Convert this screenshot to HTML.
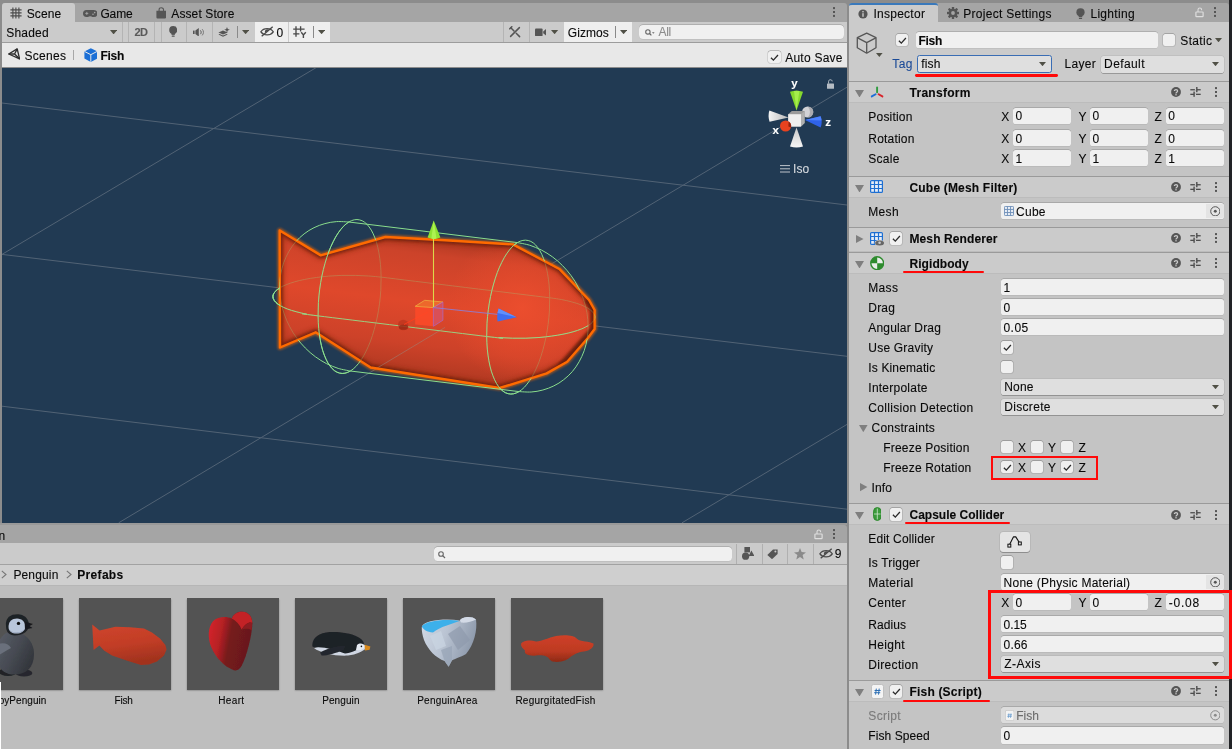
<!DOCTYPE html>
<html lang="en"><head><meta charset="utf-8"><title>Unity - Fish Prefab</title>
<style>
html,body{margin:0;padding:0;}
body{width:1232px;height:749px;overflow:hidden;background:#8c8c8c;font-family:"Liberation Sans",sans-serif;font-size:12px;color:#090909;}
#root{position:relative;width:1232px;height:749px;overflow:hidden;will-change:transform;}
#root div,#root span,#root svg{position:absolute;box-sizing:border-box;}
.t{white-space:nowrap;line-height:16px;height:16px;-webkit-font-smoothing:antialiased;-webkit-text-stroke:0.1px currentColor;}
.fld{background:#f0f0f0;border-radius:2.6px;box-shadow:0 -0.6px 0.5px rgba(0,0,0,.28),0 0.6px 0.5px rgba(0,0,0,.10);}
.dd{background:#dfdfdf;border-radius:2.6px;box-shadow:0 0 0 0.5px rgba(0,0,0,.10),0 0.7px 0.5px rgba(0,0,0,.28);}
.cb{background:#f0f0f0;border-radius:2px;box-shadow:0 0 0 0.6px rgba(0,0,0,.16),0 -0.6px 0.4px rgba(0,0,0,.25);}
.btn{background:#e4e4e4;border-radius:3px;box-shadow:0 0 0 0.5px rgba(0,0,0,.12),0 0.8px 0.5px rgba(0,0,0,.30);}

</style></head>
<body>
<div id="root">
<div style="left:1229px;top:0px;width:3px;height:749px;background:#222326;"></div>
<div style="left:2px;top:3px;width:845px;height:19px;background:#a5a5a5;border-radius:3px 3px 0 0;"></div>
<div style="left:2px;top:3px;width:73px;height:19px;background:#cbcbcb;border-radius:3px 3px 0 0;"></div>
<div style="left:2px;top:21.5px;width:845px;height:21px;background:#cbcbcb;"></div>
<div style="left:2px;top:42px;width:845px;height:1px;background:#9c9c9c;"></div>
<div style="left:2px;top:43px;width:845px;height:24.3px;background:#e8e8e8;"></div>
<div style="left:2px;top:67.2px;width:845px;height:1px;background:#8c8c8c;"></div>
<svg style="left:9.6px;top:6.6px;" width="12" height="12" viewBox="0 0 12 12"><path d="M2.9 0.4V11.6M5.9 0.4V11.6M8.9 0.4V11.6M0.4 2.9H11.6M0.4 5.9H11.6M0.4 8.9H11.6" stroke="#4d4d4d" stroke-width="1.15" fill="none"/></svg>
<span class="t" style="left:26.70px;top:5.70px;font-size:12px;letter-spacing:0.135px;">Scene</span>
<svg style="left:82.8px;top:10px;" width="14.4" height="7" viewBox="0 0 14.4 7"><rect x="0" y="0" width="14.4" height="7" rx="3.5" fill="#555"/><ellipse cx="7.2" cy="7.3" rx="2.1" ry="1" fill="#a5a5a5"/><path d="M2.3 3.4H5.3M3.8 1.9V4.9" stroke="#a5a5a5" stroke-width="0.9"/><circle cx="10" cy="4.3" r="0.8" fill="#a5a5a5"/><circle cx="11.7" cy="2.6" r="0.8" fill="#a5a5a5"/></svg>
<span class="t" style="left:100.40px;top:5.70px;font-size:12px;letter-spacing:-0.119px;">Game</span>
<svg style="left:155.8px;top:7.2px;" width="10.6" height="11.6" viewBox="0 0 10.6 11.6"><path d="M0.4 3.8H10.2V10.2A1.2 1.2 0 0 1 9 11.4H1.6A1.2 1.2 0 0 1 0.4 10.2Z" fill="#555"/><path d="M3.1 4V2.6C3.1 0.2 7.5 0.2 7.5 2.6V4" fill="none" stroke="#555" stroke-width="1.1"/></svg>
<span class="t" style="left:171.30px;top:5.70px;font-size:12px;letter-spacing:0.107px;">Asset Store</span>
<svg style="left:831.8px;top:5.800000000000001px;" width="4" height="12" viewBox="0 0 4 12"><rect x="1.0" y="1.1" width="2.0" height="2.0" fill="#555555"/><rect x="1.0" y="5.0" width="2.0" height="2.0" fill="#555555"/><rect x="1.0" y="8.9" width="2.0" height="2.0" fill="#555555"/></svg>
<span class="t" style="left:6.20px;top:24.80px;font-size:12px;letter-spacing:0.204px;">Shaded</span>
<svg style="left:110.0px;top:30.1px;" width="7.2" height="4.4" viewBox="0 0 7.2 4.4"><path d="M0 0H7.2L3.6 4.4Z" fill="#505046"/></svg>
<div style="left:122px;top:21.5px;width:1px;height:20.5px;background:#b4b4b4;"></div>
<div style="left:128.3px;top:21.5px;width:1px;height:20.5px;background:#b4b4b4;"></div>
<div style="left:154.2px;top:21.5px;width:1px;height:20.5px;background:#b4b4b4;"></div>
<div style="left:160.5px;top:21.5px;width:1px;height:20.5px;background:#b4b4b4;"></div>
<div style="left:186.4px;top:21.5px;width:1px;height:20.5px;background:#b4b4b4;"></div>
<div style="left:212.3px;top:21.5px;width:1px;height:20.5px;background:#b4b4b4;"></div>
<div style="left:502.6px;top:21.5px;width:1px;height:20.5px;background:#b4b4b4;"></div>
<div style="left:528.8px;top:21.5px;width:1px;height:20.5px;background:#b4b4b4;"></div>
<span class="t" style="left:134.60px;top:24.30px;font-size:11px;letter-spacing:-0.600px;font-weight:bold;color:#5a5a5a;">2D</span>
<svg style="left:168.8px;top:26px;" width="8.4" height="11.8" viewBox="0 0 8.4 11.8"><g fill="#555"><circle cx="4.2" cy="4.1" r="4"/><rect x="2.5" y="6.3" width="3.4" height="2.6"/><rect x="2.7" y="9.5" width="3" height="1.2" rx="0.5"/></g></svg>
<svg style="left:193px;top:27.6px;" width="12.4" height="8.6" viewBox="0 0 12.4 8.6"><g fill="#555"><rect x="0" y="2.6" width="1.6" height="3.4"/><path d="M2.4 2.6L5.8 0V8.6L2.4 6Z"/></g><g fill="none" stroke="#555" stroke-width="1"><path d="M7.4 2.4C8.4 3.4 8.4 5.2 7.4 6.2"/><path d="M9.2 1.2C10.9 3 10.9 5.6 9.2 7.4" stroke="#777"/></g></svg>
<svg style="left:217.8px;top:26.6px;" width="12" height="10.6" viewBox="0 0 12 10.6"><g fill="#555"><path d="M0.4 5.4L5 3.4L9.8 5.4L5 7.6Z"/><path d="M0.4 7.6L1.6 7.1L5 8.6L8.6 7.1L9.8 7.6L5 9.8Z"/><path d="M9 0L9.8 2L11.8 2.8L9.8 3.6L9 5.6L8.2 3.6L6.2 2.8L8.2 2Z"/></g></svg>
<div style="left:237.2px;top:26.4px;width:1px;height:11.4px;background:#8a8a8a;"></div>
<svg style="left:242.3px;top:30.1px;" width="7.2" height="4.2" viewBox="0 0 7.2 4.2"><path d="M0 0H7.2L3.6 4.2Z" fill="#505046"/></svg>
<div style="left:254.6px;top:21.5px;width:33.4px;height:20.5px;background:#efefef;"></div>
<div style="left:288.8px;top:21.5px;width:41.4px;height:20.5px;background:#efefef;"></div>
<svg style="left:260px;top:26.2px;" width="14.2" height="11" viewBox="0 0 14 11"><g fill="none" stroke="#4a4a4a" stroke-width="1.3"><path d="M0.8 5.8C3.6 1.6 10.4 1.6 13.2 5.8C10.4 9.8 3.6 9.8 0.8 5.8Z"/><path d="M1.6 10.2L12.6 0.8" stroke-width="1.4"/></g><path d="M5 6.8A2.4 2.4 0 0 1 8.8 4Z" fill="#4a4a4a"/></svg>
<span class="t" style="left:276.60px;top:25.00px;font-size:12px;letter-spacing:0.200px;">0</span>
<svg style="left:293.4px;top:26px;" width="13.6" height="12" viewBox="0 0 13.6 12"><g stroke="#4a4a4a" stroke-width="1.35" fill="none"><path d="M3 0.2V10.8M7.6 0.2V5.6M0.2 3.1H11.6M0.2 7.9H6.4"/><path d="M8.2 6.2L10.4 8.9L12.8 6.2M10.4 8.9V11.9" stroke-width="1.4"/></g></svg>
<div style="left:313.3px;top:26.4px;width:1px;height:11.4px;background:#8a8a8a;"></div>
<svg style="left:318.2px;top:30.1px;" width="7.2" height="4.2" viewBox="0 0 7.2 4.2"><path d="M0 0H7.2L3.6 4.2Z" fill="#505046"/></svg>
<svg style="left:509px;top:26px;" width="12" height="12" viewBox="0 0 12 12"><g stroke="#555" fill="none" stroke-linecap="round"><path d="M1.6 10.4L10.4 1.6" stroke-width="1.5"/><path d="M1.8 1.8L5 5M7.2 7.2L10.6 10.6" stroke-width="1.5"/><path d="M0.8 2.8L2.8 0.8" stroke-width="1.6"/></g></svg>
<svg style="left:534.6px;top:27.6px;" width="11.6" height="8.6" viewBox="0 0 11.6 8.6"><g fill="#555"><rect x="0" y="0.4" width="7.6" height="7.8" rx="1"/><path d="M8.2 3.4L11.4 0.8V7.8L8.2 5.2Z"/></g></svg>
<svg style="left:551.4px;top:30.1px;" width="7.2" height="4.2" viewBox="0 0 7.2 4.2"><path d="M0 0H7.2L3.6 4.2Z" fill="#505046"/></svg>
<div style="left:563.6px;top:21.5px;width:68px;height:20.5px;background:#efefef;"></div>
<span class="t" style="left:567.80px;top:24.80px;font-size:12px;letter-spacing:0.055px;">Gizmos</span>
<div style="left:615px;top:26.4px;width:1px;height:11.4px;background:#8a8a8a;"></div>
<svg style="left:619.6px;top:30.1px;" width="7.2" height="4.2" viewBox="0 0 7.2 4.2"><path d="M0 0H7.2L3.6 4.2Z" fill="#505046"/></svg>
<div class="fld" style="left:639.4px;top:24.6px;width:204.2px;height:14.6px;border-radius:4px;"></div>
<svg style="left:645px;top:28.6px;" width="10" height="7" viewBox="0 0 10 7"><circle cx="2.9" cy="2.9" r="2.2" fill="none" stroke="#666" stroke-width="1.1"/><path d="M4.5 4.5L6.4 6.4" stroke="#666" stroke-width="1.2"/><path d="M7 3.2H9.6L8.3 4.8Z" fill="#666"/></svg>
<span class="t" style="left:658.40px;top:24.20px;font-size:12px;letter-spacing:-0.245px;color:#8c8c8c;">All</span>
<svg style="left:8px;top:48.4px;" width="12.4" height="12" viewBox="0 0 12.4 12"><g fill="none" stroke="#2e2e2e" stroke-width="1.35" stroke-linejoin="round"><path d="M0.7 6L9.2 0.9L11.6 10.9Z"/><path d="M6.6 6L0.7 6M6.6 6L9.2 0.9M6.6 6L11.6 10.9" /></g></svg>
<span class="t" style="left:24.40px;top:47.50px;font-size:12px;letter-spacing:0.312px;">Scenes</span>
<div style="left:73px;top:50px;width:1px;height:10px;background:#a8a8a8;"></div>
<svg style="left:83.6px;top:47.8px;" width="13.6" height="14.2" viewBox="0 0 13.6 14.2"><path d="M6.8 0.3L13.2 3.4V10.6L6.8 13.9L0.4 10.6V3.4Z" fill="#1b6fd6"/><path d="M0.6 3.5L6.8 6.7L13 3.5M6.8 6.7V13.8" fill="none" stroke="#e8e8e8" stroke-width="1"/></svg>
<span class="t" style="left:100.40px;top:47.50px;font-size:12px;letter-spacing:-0.217px;font-weight:bold;">Fish</span>
<div class="cb" style="left:768px;top:50.7px;width:12.8px;height:12.8px;border-radius:2.5px;"></div>
<svg style="left:768px;top:50.7px;" width="12.8" height="12.8" viewBox="0 0 12.8 12.8"><path d="M3 6.7L5.4 9.1L10 4" fill="none" stroke="#2a2a2a" stroke-width="1.3"/></svg>
<span class="t" style="left:785.20px;top:49.80px;font-size:12px;letter-spacing:0.248px;">Auto Save</span>
<div style="left:0px;top:523px;width:847px;height:2px;background:#999999;"></div>
<div style="left:0px;top:524.8px;width:847px;height:19px;background:#a5a5a5;border-radius:0 3px 0 0;"></div>
<div style="left:0px;top:543.2px;width:847px;height:21.3px;background:#cbcbcb;"></div>
<div style="left:0px;top:564.2px;width:847px;height:1px;background:#a2a2a2;"></div>
<div style="left:0px;top:565.2px;width:847px;height:20px;background:#cfcfcf;"></div>
<div style="left:0px;top:585px;width:847px;height:164px;background:#bebebe;"></div>
<div style="left:0px;top:584.8px;width:847px;height:0.9px;background:#b6b6b6;"></div>
<span class="t" style="left:-1.60px;top:527.80px;font-size:12px;letter-spacing:0.200px;">n</span>
<svg style="left:813.8px;top:529px;" width="9" height="10.5" viewBox="0 0 9 10.5"><rect x="0.9" y="5" width="7.2" height="4.7" rx="0.6" fill="none" stroke="#dedede" stroke-width="1.2"/><path d="M3 5V2.7C3 0.4 6.6 0.4 6.6 2.7V3.2" fill="none" stroke="#dedede" stroke-width="1.1"/></svg>
<svg style="left:831.8px;top:528.2px;" width="4" height="12" viewBox="0 0 4 12"><rect x="1.0" y="1.1" width="2.0" height="2.0" fill="#555555"/><rect x="1.0" y="5.0" width="2.0" height="2.0" fill="#555555"/><rect x="1.0" y="8.9" width="2.0" height="2.0" fill="#555555"/></svg>
<div class="fld" style="left:433.6px;top:546.6px;width:298.8px;height:14.8px;border-radius:3.5px;"></div>
<svg style="left:437.6px;top:550.8px;" width="8" height="8" viewBox="0 0 8 8"><circle cx="3" cy="3" r="2.3" fill="none" stroke="#666" stroke-width="1.1"/><path d="M4.7 4.7L7 7" stroke="#666" stroke-width="1.2"/></svg>
<div style="left:735.6px;top:543.6px;width:1px;height:20.6px;background:#b0b0b0;"></div>
<div style="left:761.5px;top:543.6px;width:1px;height:20.6px;background:#b0b0b0;"></div>
<div style="left:787.4px;top:543.6px;width:1px;height:20.6px;background:#b0b0b0;"></div>
<div style="left:813.4px;top:543.6px;width:1px;height:20.6px;background:#b0b0b0;"></div>
<svg style="left:741.6px;top:547.2px;" width="12.6" height="13" viewBox="0 0 12.6 13"><g fill="#555"><rect x="2.4" y="0" width="5.6" height="5.4"/><circle cx="3.6" cy="9.2" r="3.6"/><path d="M9.4 3.6L12.4 9H6.6Z"/></g></svg>
<svg style="left:767.4px;top:548.6px;" width="11" height="10.4" viewBox="0 0 11 10.4"><path d="M0.3 5.9L6 0.4H10.6V5L5 10.2Z" fill="#555"/><circle cx="8.4" cy="2.6" r="1" fill="#cbcbcb"/></svg>
<svg style="left:794px;top:548.2px;" width="12" height="11.4" viewBox="0 0 12 11.4"><path d="M6 0L7.6 4.1L12 4.4L8.6 7.1L9.7 11.4L6 9L2.3 11.4L3.4 7.1L0 4.4L4.4 4.1Z" fill="#8a8a8a"/></svg>
<svg style="left:818.6px;top:548.4px;" width="14.2" height="11" viewBox="0 0 14 11"><g fill="none" stroke="#4a4a4a" stroke-width="1.3"><path d="M0.8 5.8C3.6 1.6 10.4 1.6 13.2 5.8C10.4 9.8 3.6 9.8 0.8 5.8Z"/><path d="M1.6 10.2L12.6 0.8" stroke-width="1.4"/></g><path d="M5 6.8A2.4 2.4 0 0 1 8.8 4Z" fill="#4a4a4a"/></svg>
<span class="t" style="left:834.80px;top:546.20px;font-size:12px;letter-spacing:0.200px;">9</span>
<svg style="left:1.4px;top:570.4px;" width="6" height="9" viewBox="0 0 6 9"><path d="M0.8 0.8L5 4.5L0.8 8.2" fill="none" stroke="#777" stroke-width="1.1"/></svg>
<span class="t" style="left:13.40px;top:566.80px;font-size:12px;letter-spacing:0.152px;">Penguin</span>
<svg style="left:65.6px;top:570.4px;" width="6" height="9" viewBox="0 0 6 9"><path d="M0.8 0.8L5 4.5L0.8 8.2" fill="none" stroke="#777" stroke-width="1.1"/></svg>
<span class="t" style="left:77.30px;top:566.80px;font-size:12px;letter-spacing:0.311px;font-weight:bold;">Prefabs</span>
<div style="left:849px;top:3px;width:380px;height:19px;background:#a5a5a5;border-radius:3px 3px 0 0;"></div>
<div style="left:849px;top:3px;width:89px;height:19px;background:#cbcbcb;border-radius:3px 3px 0 0;border-top:2px solid #3a79bb;"></div>
<div style="left:849px;top:21.5px;width:380px;height:728px;background:#c4c4c4;"></div>
<div style="left:849px;top:21.5px;width:380px;height:59.5px;background:#cbcbcb;"></div>
<svg style="left:2px;top:68px;" width="845" height="455" viewBox="0 0 845 455"><defs><clipPath id="fc"><path d="M277.7 162.5L318.8 187.4L383.4 169.0L443.0 172.2L510.8 176.4L557.8 201.3L587.0 232.0L592.6 242.0L592.6 261.0L585.7 270.2L565.2 293.7L544.6 305.4L497.6 320.0L433.0 309.8L368.7 299.5L313.7 264.3L278.0 279.5Z"/></clipPath><clipPath id="oc"><path clip-rule="evenodd" d="M0 0H845V455H0ZM277.7 162.5L318.8 187.4L383.4 169.0L443.0 172.2L510.8 176.4L557.8 201.3L587.0 232.0L592.6 242.0L592.6 261.0L585.7 270.2L565.2 293.7L544.6 305.4L497.6 320.0L433.0 309.8L368.7 299.5L313.7 264.3L278.0 279.5Z"/></clipPath><linearGradient id="fg" gradientUnits="userSpaceOnUse" x1="430" y1="165" x2="410" y2="320"><stop offset="0" stop-color="#a8361f"/><stop offset="0.14" stop-color="#cc432a"/><stop offset="0.45" stop-color="#df482b"/><stop offset="0.72" stop-color="#cd4229"/><stop offset="1" stop-color="#a4351e"/></linearGradient><radialGradient id="hl" gradientUnits="userSpaceOnUse" cx="520" cy="240" r="75"><stop offset="0" stop-color="#ec4e2e" stop-opacity="0.95"/><stop offset="0.6" stop-color="#e64b2c" stop-opacity="0.5"/><stop offset="1" stop-color="#e64b2c" stop-opacity="0"/></radialGradient><filter id="b3" x="-20%" y="-20%" width="140%" height="140%"><feGaussianBlur stdDeviation="2.6"/></filter><filter id="b1" x="-20%" y="-20%" width="140%" height="140%"><feGaussianBlur stdDeviation="1.1"/></filter><linearGradient id="zc" x1="0" y1="0" x2="0" y2="1"><stop offset="0" stop-color="#4f86ff"/><stop offset="1" stop-color="#2f55d8"/></linearGradient><linearGradient id="yc" x1="0" y1="0" x2="1" y2="0"><stop offset="0" stop-color="#7fdc2a"/><stop offset="0.5" stop-color="#a8f24a"/><stop offset="1" stop-color="#78cf2a"/></linearGradient></defs><rect width="845" height="455" fill="#213a53"/><g stroke="#8a929c" stroke-width="1" opacity="0.46" fill="none"><path d="M0.0 35.0L845.0 137.0"/><path d="M0.0 186.4L845.0 288.3"/><path d="M0.0 338.2L845.0 441.2"/><path d="M0.0 186.4L314.0 -0.3"/><path d="M116.7 454.8L845.0 19.2"/><path d="M680.0 454.8L845.0 356.4"/></g><path d="M277.7 162.5L318.8 187.4L383.4 169.0L443.0 172.2L510.8 176.4L557.8 201.3L587.0 232.0L592.6 242.0L592.6 261.0L585.7 270.2L565.2 293.7L544.6 305.4L497.6 320.0L433.0 309.8L368.7 299.5L313.7 264.3L278.0 279.5Z" fill="none" stroke="#ff6a00" stroke-width="5" stroke-linejoin="round" opacity="0.55" filter="url(#b1)"/><path d="M277.7 162.5L318.8 187.4L383.4 169.0L443.0 172.2L510.8 176.4L557.8 201.3L587.0 232.0L592.6 242.0L592.6 261.0L585.7 270.2L565.2 293.7L544.6 305.4L497.6 320.0L433.0 309.8L368.7 299.5L313.7 264.3L278.0 279.5Z" fill="url(#fg)"/><g clip-path="url(#fc)"><rect x="260" y="150" width="350" height="190" fill="url(#hl)"/><path d="M277.7 162.5L318.8 187.4L383.4 169.0L443.0 172.2L510.8 176.4L557.8 201.3L587.0 232.0L592.6 242.0L592.6 261.0L585.7 270.2L565.2 293.7L544.6 305.4L497.6 320.0L433.0 309.8L368.7 299.5L313.7 264.3L278.0 279.5Z" fill="none" stroke="#7c2610" stroke-width="7" stroke-linejoin="round" opacity="0.62" filter="url(#b3)"/><path d="M277.7 162.5L318.8 187.4L383.4 169.0L443.0 172.2L510.8 176.4L557.8 201.3L587.0 232.0L592.6 242.0L592.6 261.0L585.7 270.2L565.2 293.7L544.6 305.4L497.6 320.0L433.0 309.8L368.7 299.5L313.7 264.3L278.0 279.5Z" fill="none" stroke="#5c1a08" stroke-width="5.6" stroke-linejoin="round" opacity="0.55" filter="url(#b1)"/><path d="M584.0 232.0L591.0 243.0L591.0 261.0L558.0 298.0" fill="none" stroke="#5e1c0a" stroke-width="5" opacity="0.7" filter="url(#b1)"/><path d="M116.7 454.8L443.0 259.4" stroke="#9a8a80" stroke-width="1" opacity="0.5"/><g fill="none" stroke="#90e690" stroke-width="0.9" opacity="0.3"><path d="M346.8 154.0C348.6 152.9 350.5 152.1 352.3 151.8C354.1 151.4 355.9 151.5 357.6 151.9C359.4 152.3 361.1 153.1 362.7 154.3C364.3 155.5 365.8 157.1 367.2 159.0C368.7 160.9 370.0 163.2 371.2 165.8C372.4 168.4 373.5 171.3 374.5 174.5C375.4 177.7 376.3 181.2 376.9 184.8C377.6 188.5 378.1 192.5 378.5 196.5C378.8 200.6 379.1 204.8 379.1 209.1C379.1 213.5 379.0 217.9 378.8 222.4C378.5 226.8 378.1 231.4 377.5 235.8C376.9 240.2 376.2 244.7 375.3 249.0C374.4 253.3 373.4 257.5 372.2 261.6C371.1 265.6 369.8 269.5 368.5 273.1C367.1 276.8 365.6 280.2 364.0 283.3C362.5 286.5 360.8 289.4 359.1 291.9C357.4 294.4 355.6 296.7 353.9 298.5C352.1 300.4 350.2 301.9 348.4 303.0C346.6 304.1 344.7 304.9 342.9 305.2C341.1 305.6 339.3 305.5 337.6 305.1C335.8 304.7 334.1 303.9 332.5 302.7C330.9 301.5 329.4 299.9 328.0 298.0C326.5 296.1 325.2 293.8 324.0 291.2C322.8 288.6 321.7 285.7 320.7 282.5C319.8 279.3 318.9 275.8 318.3 272.2C317.6 268.5 317.1 264.5 316.7 260.5C316.4 256.4 316.1 252.2 316.1 247.9C316.1 243.5 316.2 239.1 316.4 234.6C316.7 230.2 317.1 225.6 317.7 221.2C318.3 216.8 319.0 212.3 319.9 208.0C320.8 203.7 321.8 199.5 323.0 195.4C324.1 191.4 325.4 187.5 326.7 183.9C328.1 180.2 329.6 176.8 331.2 173.7C332.7 170.5 334.4 167.6 336.1 165.1C337.8 162.6 339.6 160.3 341.3 158.5C343.1 156.6 345.0 155.1 346.8 154.0Z"/><path d="M515.4 174.6C517.2 173.5 519.1 172.7 520.9 172.4C522.7 172.0 524.5 172.1 526.2 172.5C528.0 172.9 529.7 173.7 531.3 174.9C532.9 176.1 534.4 177.7 535.8 179.6C537.3 181.5 538.6 183.8 539.8 186.4C541.0 189.0 542.1 191.9 543.1 195.1C544.0 198.3 544.9 201.8 545.5 205.4C546.2 209.1 546.7 213.1 547.1 217.1C547.4 221.2 547.7 225.4 547.7 229.8C547.7 234.1 547.6 238.5 547.4 243.0C547.1 247.4 546.7 252.0 546.1 256.4C545.5 260.8 544.8 265.3 543.9 269.6C543.0 273.9 542.0 278.1 540.8 282.2C539.7 286.2 538.4 290.1 537.1 293.7C535.7 297.4 534.2 300.8 532.6 303.9C531.1 307.1 529.4 310.0 527.7 312.5C526.0 315.0 524.2 317.3 522.5 319.1C520.7 321.0 518.8 322.5 517.0 323.6C515.2 324.7 513.3 325.5 511.5 325.8C509.7 326.2 507.9 326.1 506.2 325.7C504.4 325.3 502.7 324.5 501.1 323.3C499.5 322.1 498.0 320.5 496.6 318.6C495.1 316.7 493.8 314.4 492.6 311.8C491.4 309.2 490.3 306.3 489.3 303.1C488.4 299.9 487.5 296.4 486.9 292.8C486.2 289.1 485.7 285.1 485.3 281.1C485.0 277.0 484.7 272.8 484.7 268.5C484.7 264.1 484.8 259.7 485.0 255.2C485.3 250.8 485.7 246.2 486.3 241.8C486.9 237.4 487.6 232.9 488.5 228.6C489.4 224.3 490.4 220.1 491.6 216.0C492.7 212.0 494.0 208.1 495.3 204.5C496.7 200.8 498.2 197.4 499.8 194.3C501.3 191.1 503.0 188.2 504.7 185.7C506.4 183.2 508.2 180.9 509.9 179.1C511.7 177.2 513.6 175.7 515.4 174.6Z"/><path d="M348.4 303.0C346.4 302.6 340.2 301.6 336.2 300.4C332.3 299.1 328.3 297.5 324.4 295.6C320.6 293.6 316.9 291.3 313.3 288.7C309.8 286.1 306.4 283.2 303.3 280.0C300.2 276.9 297.2 273.4 294.6 269.8C291.9 266.2 289.5 262.3 287.5 258.3C285.4 254.3 283.6 250.1 282.2 245.9C280.8 241.7 279.6 237.3 278.9 233.0C278.2 228.6 277.7 224.2 277.7 219.9C277.7 215.6 278.0 211.3 278.6 207.1C279.3 202.9 280.3 198.8 281.6 194.9C283.0 191.1 284.7 187.3 286.7 183.8C288.6 180.3 291.0 177.0 293.5 174.0C296.1 171.0 299.0 168.3 302.1 165.9C305.1 163.5 308.5 161.4 312.0 159.7C315.4 158.0 319.2 156.6 322.9 155.6C326.7 154.5 330.7 153.9 334.7 153.6C338.7 153.4 344.8 153.9 346.8 154.0"/><path d="M517.0 323.6C519.0 323.7 525.1 324.2 529.1 324.0C533.1 323.7 537.1 323.1 540.9 322.0C544.6 321.0 548.4 319.6 551.8 317.9C555.3 316.2 558.7 314.1 561.7 311.7C564.8 309.3 567.7 306.6 570.3 303.6C572.8 300.6 575.2 297.3 577.1 293.8C579.1 290.3 580.8 286.5 582.2 282.7C583.5 278.8 584.5 274.7 585.2 270.5C585.8 266.3 586.1 262.0 586.1 257.7C586.1 253.4 585.6 249.0 584.9 244.6C584.2 240.3 583.0 235.9 581.6 231.7C580.2 227.5 578.4 223.3 576.3 219.3C574.3 215.3 571.9 211.4 569.2 207.8C566.6 204.2 563.6 200.7 560.5 197.6C557.4 194.4 554.0 191.5 550.5 188.9C546.9 186.3 543.2 184.0 539.4 182.0C535.5 180.1 531.5 178.5 527.6 177.2C523.6 176.0 517.4 175.0 515.4 174.6"/><path d="M316.1 247.9C314.2 247.6 308.1 246.7 304.4 246.1C300.8 245.4 297.3 244.6 294.1 243.7C290.9 242.9 288.0 241.9 285.4 241.0C282.8 240.0 280.5 238.9 278.5 237.8C276.6 236.7 275.0 235.5 273.8 234.3C272.6 233.2 271.8 231.9 271.3 230.7C270.9 229.5 270.8 228.3 271.1 227.0C271.5 225.8 272.2 224.6 273.3 223.4C274.4 222.2 275.9 221.0 277.7 219.9C279.5 218.8 281.7 217.7 284.2 216.7C286.7 215.7 289.6 214.7 292.7 213.8C295.8 212.9 299.2 212.1 302.8 211.4C306.4 210.7 310.3 210.0 314.3 209.5C318.3 208.9 322.5 208.5 326.8 208.1C331.1 207.8 335.5 207.6 339.9 207.4C344.3 207.3 348.9 207.3 353.3 207.4C357.7 207.5 362.2 207.7 366.5 208.0C370.8 208.2 377.0 209.0 379.1 209.1"/><path d="M484.7 268.5C486.8 268.6 493.0 269.4 497.3 269.6C501.6 269.9 506.1 270.1 510.5 270.2C514.9 270.3 519.5 270.3 523.9 270.2C528.3 270.0 532.7 269.8 537.0 269.5C541.3 269.1 545.5 268.7 549.5 268.1C553.5 267.6 557.4 266.9 561.0 266.2C564.6 265.5 568.0 264.7 571.1 263.8C574.2 262.9 577.1 261.9 579.6 260.9C582.1 259.9 584.3 258.8 586.1 257.7C587.9 256.6 589.4 255.4 590.5 254.2C591.6 253.0 592.3 251.8 592.7 250.6C593.0 249.3 592.9 248.1 592.5 246.9C592.0 245.7 591.2 244.4 590.0 243.3C588.8 242.1 587.2 240.9 585.3 239.8C583.3 238.7 581.0 237.6 578.4 236.6C575.8 235.7 572.9 234.7 569.7 233.9C566.5 233.0 563.0 232.2 559.4 231.5C555.7 230.9 549.6 230.0 547.7 229.8"/><path d="M379.1 209.1C407.2 212.6 519.6 226.3 547.7 229.8"/><path d="M346.8 154.0L515.4 174.6"/><path d="M348.4 303.0L517.0 323.6"/></g></g><path d="M277.7 162.5L318.8 187.4L383.4 169.0L443.0 172.2L510.8 176.4L557.8 201.3L587.0 232.0L592.6 242.0L592.6 261.0L585.7 270.2L565.2 293.7L544.6 305.4L497.6 320.0L433.0 309.8L368.7 299.5L313.7 264.3L278.0 279.5Z" fill="none" stroke="#ff6a00" stroke-width="2.4" stroke-linejoin="round"/><g fill="none" stroke="#90e690" stroke-width="1" opacity="0.95" clip-path="url(#oc)"><path d="M346.8 154.0C348.6 152.9 350.5 152.1 352.3 151.8C354.1 151.4 355.9 151.5 357.6 151.9C359.4 152.3 361.1 153.1 362.7 154.3C364.3 155.5 365.8 157.1 367.2 159.0C368.7 160.9 370.0 163.2 371.2 165.8C372.4 168.4 373.5 171.3 374.5 174.5C375.4 177.7 376.3 181.2 376.9 184.8C377.6 188.5 378.1 192.5 378.5 196.5C378.8 200.6 379.1 204.8 379.1 209.1C379.1 213.5 379.0 217.9 378.8 222.4C378.5 226.8 378.1 231.4 377.5 235.8C376.9 240.2 376.2 244.7 375.3 249.0C374.4 253.3 373.4 257.5 372.2 261.6C371.1 265.6 369.8 269.5 368.5 273.1C367.1 276.8 365.6 280.2 364.0 283.3C362.5 286.5 360.8 289.4 359.1 291.9C357.4 294.4 355.6 296.7 353.9 298.5C352.1 300.4 350.2 301.9 348.4 303.0C346.6 304.1 344.7 304.9 342.9 305.2C341.1 305.6 339.3 305.5 337.6 305.1C335.8 304.7 334.1 303.9 332.5 302.7C330.9 301.5 329.4 299.9 328.0 298.0C326.5 296.1 325.2 293.8 324.0 291.2C322.8 288.6 321.7 285.7 320.7 282.5C319.8 279.3 318.9 275.8 318.3 272.2C317.6 268.5 317.1 264.5 316.7 260.5C316.4 256.4 316.1 252.2 316.1 247.9C316.1 243.5 316.2 239.1 316.4 234.6C316.7 230.2 317.1 225.6 317.7 221.2C318.3 216.8 319.0 212.3 319.9 208.0C320.8 203.7 321.8 199.5 323.0 195.4C324.1 191.4 325.4 187.5 326.7 183.9C328.1 180.2 329.6 176.8 331.2 173.7C332.7 170.5 334.4 167.6 336.1 165.1C337.8 162.6 339.6 160.3 341.3 158.5C343.1 156.6 345.0 155.1 346.8 154.0Z"/><path d="M515.4 174.6C517.2 173.5 519.1 172.7 520.9 172.4C522.7 172.0 524.5 172.1 526.2 172.5C528.0 172.9 529.7 173.7 531.3 174.9C532.9 176.1 534.4 177.7 535.8 179.6C537.3 181.5 538.6 183.8 539.8 186.4C541.0 189.0 542.1 191.9 543.1 195.1C544.0 198.3 544.9 201.8 545.5 205.4C546.2 209.1 546.7 213.1 547.1 217.1C547.4 221.2 547.7 225.4 547.7 229.8C547.7 234.1 547.6 238.5 547.4 243.0C547.1 247.4 546.7 252.0 546.1 256.4C545.5 260.8 544.8 265.3 543.9 269.6C543.0 273.9 542.0 278.1 540.8 282.2C539.7 286.2 538.4 290.1 537.1 293.7C535.7 297.4 534.2 300.8 532.6 303.9C531.1 307.1 529.4 310.0 527.7 312.5C526.0 315.0 524.2 317.3 522.5 319.1C520.7 321.0 518.8 322.5 517.0 323.6C515.2 324.7 513.3 325.5 511.5 325.8C509.7 326.2 507.9 326.1 506.2 325.7C504.4 325.3 502.7 324.5 501.1 323.3C499.5 322.1 498.0 320.5 496.6 318.6C495.1 316.7 493.8 314.4 492.6 311.8C491.4 309.2 490.3 306.3 489.3 303.1C488.4 299.9 487.5 296.4 486.9 292.8C486.2 289.1 485.7 285.1 485.3 281.1C485.0 277.0 484.7 272.8 484.7 268.5C484.7 264.1 484.8 259.7 485.0 255.2C485.3 250.8 485.7 246.2 486.3 241.8C486.9 237.4 487.6 232.9 488.5 228.6C489.4 224.3 490.4 220.1 491.6 216.0C492.7 212.0 494.0 208.1 495.3 204.5C496.7 200.8 498.2 197.4 499.8 194.3C501.3 191.1 503.0 188.2 504.7 185.7C506.4 183.2 508.2 180.9 509.9 179.1C511.7 177.2 513.6 175.7 515.4 174.6Z"/><path d="M348.4 303.0C346.4 302.6 340.2 301.6 336.2 300.4C332.3 299.1 328.3 297.5 324.4 295.6C320.6 293.6 316.9 291.3 313.3 288.7C309.8 286.1 306.4 283.2 303.3 280.0C300.2 276.9 297.2 273.4 294.6 269.8C291.9 266.2 289.5 262.3 287.5 258.3C285.4 254.3 283.6 250.1 282.2 245.9C280.8 241.7 279.6 237.3 278.9 233.0C278.2 228.6 277.7 224.2 277.7 219.9C277.7 215.6 278.0 211.3 278.6 207.1C279.3 202.9 280.3 198.8 281.6 194.9C283.0 191.1 284.7 187.3 286.7 183.8C288.6 180.3 291.0 177.0 293.5 174.0C296.1 171.0 299.0 168.3 302.1 165.9C305.1 163.5 308.5 161.4 312.0 159.7C315.4 158.0 319.2 156.6 322.9 155.6C326.7 154.5 330.7 153.9 334.7 153.6C338.7 153.4 344.8 153.9 346.8 154.0"/><path d="M517.0 323.6C519.0 323.7 525.1 324.2 529.1 324.0C533.1 323.7 537.1 323.1 540.9 322.0C544.6 321.0 548.4 319.6 551.8 317.9C555.3 316.2 558.7 314.1 561.7 311.7C564.8 309.3 567.7 306.6 570.3 303.6C572.8 300.6 575.2 297.3 577.1 293.8C579.1 290.3 580.8 286.5 582.2 282.7C583.5 278.8 584.5 274.7 585.2 270.5C585.8 266.3 586.1 262.0 586.1 257.7C586.1 253.4 585.6 249.0 584.9 244.6C584.2 240.3 583.0 235.9 581.6 231.7C580.2 227.5 578.4 223.3 576.3 219.3C574.3 215.3 571.9 211.4 569.2 207.8C566.6 204.2 563.6 200.7 560.5 197.6C557.4 194.4 554.0 191.5 550.5 188.9C546.9 186.3 543.2 184.0 539.4 182.0C535.5 180.1 531.5 178.5 527.6 177.2C523.6 176.0 517.4 175.0 515.4 174.6"/><path d="M316.1 247.9C314.2 247.6 308.1 246.7 304.4 246.1C300.8 245.4 297.3 244.6 294.1 243.7C290.9 242.9 288.0 241.9 285.4 241.0C282.8 240.0 280.5 238.9 278.5 237.8C276.6 236.7 275.0 235.5 273.8 234.3C272.6 233.2 271.8 231.9 271.3 230.7C270.9 229.5 270.8 228.3 271.1 227.0C271.5 225.8 272.2 224.6 273.3 223.4C274.4 222.2 275.9 221.0 277.7 219.9C279.5 218.8 281.7 217.7 284.2 216.7C286.7 215.7 289.6 214.7 292.7 213.8C295.8 212.9 299.2 212.1 302.8 211.4C306.4 210.7 310.3 210.0 314.3 209.5C318.3 208.9 322.5 208.5 326.8 208.1C331.1 207.8 335.5 207.6 339.9 207.4C344.3 207.3 348.9 207.3 353.3 207.4C357.7 207.5 362.2 207.7 366.5 208.0C370.8 208.2 377.0 209.0 379.1 209.1"/><path d="M484.7 268.5C486.8 268.6 493.0 269.4 497.3 269.6C501.6 269.9 506.1 270.1 510.5 270.2C514.9 270.3 519.5 270.3 523.9 270.2C528.3 270.0 532.7 269.8 537.0 269.5C541.3 269.1 545.5 268.7 549.5 268.1C553.5 267.6 557.4 266.9 561.0 266.2C564.6 265.5 568.0 264.7 571.1 263.8C574.2 262.9 577.1 261.9 579.6 260.9C582.1 259.9 584.3 258.8 586.1 257.7C587.9 256.6 589.4 255.4 590.5 254.2C591.6 253.0 592.3 251.8 592.7 250.6C593.0 249.3 592.9 248.1 592.5 246.9C592.0 245.7 591.2 244.4 590.0 243.3C588.8 242.1 587.2 240.9 585.3 239.8C583.3 238.7 581.0 237.6 578.4 236.6C575.8 235.7 572.9 234.7 569.7 233.9C566.5 233.0 563.0 232.2 559.4 231.5C555.7 230.9 549.6 230.0 547.7 229.8"/><path d="M379.1 209.1C407.2 212.6 519.6 226.3 547.7 229.8"/><path d="M277.7 219.9C277.0 220.5 274.4 222.2 273.3 223.4C272.2 224.6 271.5 225.8 271.1 227.0C270.8 228.3 270.9 229.5 271.3 230.7C271.8 231.9 272.6 233.2 273.8 234.3C275.0 235.5 276.6 236.7 278.5 237.8C280.5 238.9 282.8 240.0 285.4 241.0C288.0 241.9 290.9 242.9 294.1 243.7C297.3 244.6 300.8 245.4 304.4 246.1C308.1 246.7 286.1 244.1 316.1 247.9C346.1 251.6 454.5 264.8 484.7 268.5C514.9 272.1 493.0 269.4 497.3 269.6C501.6 269.9 506.1 270.1 510.5 270.2C514.9 270.3 519.5 270.3 523.9 270.2C528.3 270.0 532.7 269.8 537.0 269.5C541.3 269.1 545.5 268.7 549.5 268.1C553.5 267.6 557.4 266.9 561.0 266.2C564.6 265.5 568.0 264.7 571.1 263.8C574.2 262.9 577.1 261.9 579.6 260.9C582.1 259.9 585.0 258.2 586.1 257.7"/><path d="M346.8 154.0L515.4 174.6"/><path d="M348.4 303.0L517.0 323.6"/></g><g fill="none" stroke="#90e690" stroke-width="1" opacity="0.85"><path d="M348.4 303.0C347.5 303.4 344.7 304.9 342.9 305.2C341.1 305.6 339.3 305.5 337.6 305.1C335.8 304.7 334.1 303.9 332.5 302.7C330.9 301.5 329.4 299.9 328.0 298.0C326.5 296.1 325.2 293.8 324.0 291.2C322.8 288.6 321.7 285.7 320.7 282.5C319.8 279.3 318.9 275.8 318.3 272.2C317.6 268.5 317.1 264.5 316.7 260.5C316.4 256.4 316.1 252.2 316.1 247.9C316.1 243.5 316.2 239.1 316.4 234.6C316.7 230.2 317.1 225.6 317.7 221.2C318.3 216.8 319.0 212.3 319.9 208.0C320.8 203.7 321.8 199.5 323.0 195.4C324.1 191.4 325.4 187.5 326.7 183.9C328.1 180.2 329.6 176.8 331.2 173.7C332.7 170.5 334.4 167.6 336.1 165.1C337.8 162.6 339.6 160.3 341.3 158.5C343.1 156.6 345.9 154.7 346.8 154.0"/><path d="M517.0 323.6C516.1 324.0 513.3 325.5 511.5 325.8C509.7 326.2 507.9 326.1 506.2 325.7C504.4 325.3 502.7 324.5 501.1 323.3C499.5 322.1 498.0 320.5 496.6 318.6C495.1 316.7 493.8 314.4 492.6 311.8C491.4 309.2 490.3 306.3 489.3 303.1C488.4 299.9 487.5 296.4 486.9 292.8C486.2 289.1 485.7 285.1 485.3 281.1C485.0 277.0 484.7 272.8 484.7 268.5C484.7 264.1 484.8 259.7 485.0 255.2C485.3 250.8 485.7 246.2 486.3 241.8C486.9 237.4 487.6 232.9 488.5 228.6C489.4 224.3 490.4 220.1 491.6 216.0C492.7 212.0 494.0 208.1 495.3 204.5C496.7 200.8 498.2 197.4 499.8 194.3C501.3 191.1 503.0 188.2 504.7 185.7C506.4 183.2 508.2 180.9 509.9 179.1C511.7 177.2 514.5 175.3 515.4 174.6"/><path d="M277.7 219.9C277.0 220.5 274.4 222.2 273.3 223.4C272.2 224.6 271.5 225.8 271.1 227.0C270.8 228.3 270.9 229.5 271.3 230.7C271.8 231.9 272.6 233.2 273.8 234.3C275.0 235.5 276.6 236.7 278.5 237.8C280.5 238.9 282.8 240.0 285.4 241.0C288.0 241.9 290.9 242.9 294.1 243.7C297.3 244.6 300.8 245.4 304.4 246.1C308.1 246.7 286.1 244.1 316.1 247.9C346.1 251.6 454.5 264.8 484.7 268.5C514.9 272.1 493.0 269.4 497.3 269.6C501.6 269.9 506.1 270.1 510.5 270.2C514.9 270.3 519.5 270.3 523.9 270.2C528.3 270.0 532.7 269.8 537.0 269.5C541.3 269.1 545.5 268.7 549.5 268.1C553.5 267.6 557.4 266.9 561.0 266.2C564.6 265.5 568.0 264.7 571.1 263.8C574.2 262.9 577.1 261.9 579.6 260.9C582.1 259.9 585.0 258.2 586.1 257.7"/></g><circle cx="401.2" cy="257" r="5.2" fill="#b5301a" opacity="0.6"/><ellipse cx="401.6" cy="259.2" rx="4.6" ry="2.6" fill="#8e2412" opacity="0.6"/><path d="M402.0 256.5L426.0 244.0" stroke="#ff3d1c" stroke-width="1" opacity="0.9"/><path d="M413.2 238.3L431.4 239.6L431.4 258.3L413.2 256.6Z" fill="#ff4a28" opacity="0.8"/><path d="M413.2 238.3L422.7 232.3L440.9 234.0L431.4 239.6Z" fill="#ee6a2c" stroke="#f0b040" stroke-width="0.8" opacity="0.95"/><path d="M431.4 239.6L440.9 234.0L440.9 252.2L431.4 258.3Z" fill="#d9505a" stroke="#a86ad0" stroke-width="0.7" opacity="0.95"/><path d="M431.5 170.0L431.5 239.0" stroke="#dcd84a" stroke-width="1.1"/><path d="M431.7 152.6L438.4 169.6Q432.0 172.4 425.6 169.6Z" fill="#8fe233"/><path d="M431.7 152.6L434.5 170.6Q432.0 171.6 429.4 170.6Z" fill="#b4f65a" opacity="0.8"/><path d="M431.6 239.6L496.0 246.4" stroke="#8a80dc" stroke-width="1" opacity="0.85"/><path d="M514.8 249.2L496.6 240.6Q494.4 247.0 495.6 253.6Z" fill="#3f6ef0"/><path d="M514.8 249.2L496.6 240.6L495.4 245.0Z" fill="#6a98ff" opacity="0.8"/></svg>
<svg style="left:750px;top:68px;" width="97" height="120" viewBox="0 0 97 120"><defs><linearGradient id="wc" x1="0" y1="0" x2="1" y2="0"><stop offset="0" stop-color="#f4f4f4"/><stop offset="1" stop-color="#b8b8b8"/></linearGradient><linearGradient id="wd" x1="0" y1="0" x2="0" y2="1"><stop offset="0" stop-color="#c8c8c8"/><stop offset="1" stop-color="#f6f6f6"/></linearGradient></defs><circle cx="57.7" cy="44" r="5.6" fill="#d2d2d6"/><path d="M57.7 38.4A5.6 5.6 0 0 1 57.7 49.6A8 8 0 0 0 57.7 38.4Z" fill="#9a9aa0" opacity="0.7"/><path d="M38.6 49.4L19.4 42.6Q17.6 48 19.6 53.8Z" fill="url(#wc)"/><path d="M46.5 59.6L53 78.4Q46.5 80.4 40 78.4Z" fill="url(#wd)"/><path d="M46.5 42.6L40 23.8Q46.5 21.6 53 23.8Z" fill="#86d92e"/><path d="M46.5 42.6L44 23Q46.5 22.4 49.4 23Z" fill="#a6ee4c"/><path d="M55 52L70.6 48.2Q72.8 53.8 70.6 59.4Z" fill="#2f62e8"/><path d="M55 52L70.6 48.2Q71.4 50.4 71.6 52.6Z" fill="#4c82ff"/><path d="M38.2 46.2L41.8 43H54.6V55L51 58.6H38.2Z" fill="#9a9a9a"/><rect x="38.2" y="46.2" width="12.8" height="12.4" fill="#eeeeee"/><path d="M51 46.2L54.6 43V55L51 58.6Z" fill="#b0b0b0"/><circle cx="35.6" cy="58" r="5.6" fill="#e8421f"/><path d="M38.6 53.4A5.6 5.6 0 0 1 41 59.4L38.4 58.6Z" fill="#7a1c0c" opacity="0.8"/><g fill="#cfd3d8" opacity="0.85"><rect x="77" y="15.4" width="7" height="5.4" rx="0.6"/></g><path d="M78.6 15.6V13.4C78.6 11.2 82.2 11.2 82.2 13.4" fill="none" stroke="#cfd3d8" stroke-width="1" opacity="0.85"/><g stroke="#cfd3d8" stroke-width="1" opacity="0.9"><path d="M30 97.6H40M30 100.8H40M30 104H40"/></g></svg>
<span class="t" style="left:791.20px;top:75.00px;font-size:11.5px;letter-spacing:0.200px;font-weight:bold;color:#ffffff;">y</span>
<span class="t" style="left:825.20px;top:114.20px;font-size:11.5px;letter-spacing:0.200px;font-weight:bold;color:#ffffff;">z</span>
<span class="t" style="left:772.40px;top:122.40px;font-size:11.5px;letter-spacing:0.200px;font-weight:bold;color:#ffffff;">x</span>
<span class="t" style="left:793.00px;top:160.60px;font-size:12px;letter-spacing:0.131px;color:#d5d9de;">Iso</span>
<div style="left:-29px;top:597.8px;width:92.2px;height:91.8px;background:#535353;box-shadow:0 0.6px 1.6px rgba(0,0,0,.38);"></div>
<div style="left:79px;top:597.8px;width:92.2px;height:91.8px;background:#535353;box-shadow:0 0.6px 1.6px rgba(0,0,0,.38);"></div>
<div style="left:187px;top:597.8px;width:92.2px;height:91.8px;background:#535353;box-shadow:0 0.6px 1.6px rgba(0,0,0,.38);"></div>
<div style="left:295px;top:597.8px;width:92.2px;height:91.8px;background:#535353;box-shadow:0 0.6px 1.6px rgba(0,0,0,.38);"></div>
<div style="left:403px;top:597.8px;width:92.2px;height:91.8px;background:#535353;box-shadow:0 0.6px 1.6px rgba(0,0,0,.38);"></div>
<div style="left:511px;top:597.8px;width:92.2px;height:91.8px;background:#535353;box-shadow:0 0.6px 1.6px rgba(0,0,0,.38);"></div>
<svg style="left:0px;top:590px;" width="620" height="110" viewBox="0 0 620 110"><defs><linearGradient id="pf" x1="0" y1="0" x2="0.25" y2="1"><stop offset="0" stop-color="#cf452c"/><stop offset="0.55" stop-color="#c23d26"/><stop offset="1" stop-color="#a2331e"/></linearGradient><linearGradient id="ph" x1="0" y1="0.2" x2="1" y2="0.45"><stop offset="0" stop-color="#d6252b"/><stop offset="0.3" stop-color="#b52024"/><stop offset="0.52" stop-color="#751b1d"/><stop offset="1" stop-color="#68181a"/></linearGradient><linearGradient id="pb" x1="0" y1="0" x2="1" y2="0.6"><stop offset="0" stop-color="#5b606a"/><stop offset="0.6" stop-color="#454951"/><stop offset="1" stop-color="#33363c"/></linearGradient><linearGradient id="pi" x1="0" y1="0" x2="1" y2="0.3"><stop offset="0" stop-color="#d2dae6"/><stop offset="0.5" stop-color="#b9c3d2"/><stop offset="1" stop-color="#8f9bad"/></linearGradient><linearGradient id="ps" x1="0" y1="0" x2="0" y2="1"><stop offset="0" stop-color="#cf4028"/><stop offset="0.6" stop-color="#bd3a22"/><stop offset="1" stop-color="#8e2a16"/></linearGradient><filter id="pb1" x="-10%" y="-10%" width="120%" height="120%"><feGaussianBlur stdDeviation="0.45"/></filter></defs><g filter="url(#pb1)"><ellipse cx="8" cy="82" rx="9" ry="4" fill="#202226"/><ellipse cx="24" cy="83" rx="8.4" ry="3.6" fill="#26282d"/><path d="M6.0 43.0C22.0 38.0 34.0 50.0 34.0 64.0C34.0 78.0 26.0 84.5 14.0 84.5C4.0 84.5 -3.0 78.0 -4.0 65.0C-4.0 55.0 0.0 47.0 6.0 43.0Z" fill="url(#pb)"/><path d="M-2.0 54.0C4.0 52.0 9.0 54.0 11.0 58.0C7.0 60.0 2.0 63.0 -2.0 66.0Z" fill="#6a707b"/><path d="M6.0 36.0C5.0 26.0 13.0 23.5 20.0 24.5C26.0 25.5 29.0 30.0 29.0 36.0C28.0 42.0 22.0 45.5 15.0 45.5C9.0 45.5 6.0 42.0 6.0 36.0Z" fill="#1f2125"/><path d="M8.6 38.0C8.0 31.5 12.0 28.5 17.0 28.5C22.0 28.5 25.4 32.0 25.4 37.0C25.0 41.0 21.0 43.6 16.4 43.6C12.0 43.6 9.0 41.5 8.6 38.0Z" fill="#b9c6da"/><path d="M9.0 39.0C12.0 43.5 20.0 44.0 25.0 39.0C23.0 43.4 12.0 45.4 9.0 39.0Z" fill="#8e9cb4"/><circle cx="18.5" cy="33.39999999999998" r="1.7" fill="#111"/><path d="M24.6 31.6L33.0 34.0L29.6 36.0L32.4 38.0L25.0 39.4Z" fill="#17181b"/></g><path d="M92.2 34.6L99.6 40.6L106.0 39.0L115.3 36.8L130.0 37.2L144.0 38.6L152.0 42.4L160.0 48.4L165.4 55.0L166.6 59.6L164.0 65.6L157.0 71.4L149.0 74.6L141.0 75.0L128.0 71.0L112.0 65.6L104.0 60.4L99.4 55.6L93.6 60.0Z" fill="url(#pf)" filter="url(#pb1)"/><g filter="url(#pb1)"><path d="M231.8 28.6C233.6 23.2 238.9 21.1 242.5 21.8C248.8 22.3 252.3 26.8 252.3 33.0C252.3 44.6 247.0 66.1 241.6 75.9C238.9 80.4 235.4 81.2 232.7 79.8C224.6 76.8 215.7 67.9 211.2 57.1C207.7 48.2 207.7 37.5 213.0 31.3C217.5 26.8 226.4 25.9 231.8 28.6Z" fill="url(#ph)"/><path d="M231.8 28.6C233.6 23.2 238.9 21.1 242.5 21.8C248.8 22.3 252.3 26.8 252.3 33.0C249.6 31.3 245.2 33.9 241.6 39.6C239.8 34.8 236.2 30.7 231.8 28.6Z" fill="#c32227"/><path d="M252.3 33.0C249.6 31.3 245.2 33.9 241.6 39.6C244.3 38.4 248.8 38.4 251.8 40.2Z" fill="#8c1d20"/></g><g filter="url(#pb1)"><path d="M314.0 58.0C320.0 63.0 336.0 66.4 348.0 65.6C356.0 65.0 364.0 61.0 367.0 57.6L360.0 51.0L330.0 54.0Z" fill="#cfd6e2"/><path d="M312.4 56.6C311.6 50.0 316.0 44.0 326.0 42.4C338.0 41.4 350.0 43.0 357.0 46.6C362.0 49.0 365.0 52.6 363.6 55.4C359.0 60.0 350.0 62.6 345.0 63.6C336.0 60.0 322.0 56.0 314.6 57.6Z" fill="#1d2126"/><path d="M320.0 62.6C328.0 58.0 338.0 55.4 345.6 55.8L343.6 60.0C336.0 63.0 328.0 65.6 321.6 65.6Z" fill="#23272d"/><path d="M357.0 55.0C360.0 52.6 363.6 53.6 365.0 56.0C364.0 59.6 360.0 60.6 356.0 60.0Z" fill="#e6ebf2"/><circle cx="361.4" cy="56.39999999999998" r="0.8" fill="#111"/><path d="M364.6 54.8L370.4 56.4L369.6 59.8L365.0 60.4Z" fill="#d98a1e"/></g><g filter="url(#pb1)"><path d="M421.8 37.0C424.0 30.0 445.0 28.4 460.0 30.4C462.0 26.6 472.0 25.6 476.0 29.6C477.6 40.0 474.0 55.0 466.0 64.0C460.0 67.6 455.0 68.4 452.0 70.6L448.6 76.8L444.6 71.0C436.0 68.0 428.0 60.0 424.0 50.0C422.4 45.0 421.6 41.0 421.8 37.0Z" fill="url(#pi)"/><path d="M448.0 44.0L460.0 36.0L470.0 50.0L458.0 60.0Z" fill="#8e9aac" opacity="0.7"/><path d="M430.0 46.0L441.0 41.0L446.0 56.0L436.0 60.0Z" fill="#cbd5e3" opacity="0.7"/><path d="M441.0 60.0L452.0 56.0L452.0 70.0L448.6 76.8L444.6 71.0Z" fill="#9aa6b8" opacity="0.8"/><path d="M421.8 36.6C425.0 30.6 446.0 28.6 459.6 31.0C452.0 34.0 440.0 36.6 433.0 42.6C427.0 42.0 423.0 39.6 421.8 36.6Z" fill="#3db0ea"/><path d="M460.0 30.4C462.0 26.6 472.0 25.6 476.0 29.6C472.0 32.0 466.0 33.0 461.0 32.6Z" fill="#d3dae6"/></g><path filter="url(#pb1)" d="M521.0 54.0C522.0 50.6 530.0 49.6 536.0 51.4C542.0 51.6 548.0 47.6 556.0 46.0C564.0 44.4 574.0 45.0 576.6 48.4C580.0 52.0 590.0 51.0 593.4 53.6C594.6 57.0 590.0 61.0 584.0 61.6C578.0 62.0 573.0 65.0 568.0 69.0C562.0 72.6 552.0 73.0 549.6 69.4C548.0 66.0 542.0 64.6 536.0 65.6C529.0 66.6 523.6 64.0 525.0 60.6C523.0 58.6 520.6 56.6 521.0 54.0Z" fill="url(#ps)"/></svg>
<span class="t" style="left:-13.72px;top:692.90px;font-size:10px;letter-spacing:0.063px;">BabyPenguin</span>
<span class="t" style="left:114.40px;top:692.90px;font-size:10px;letter-spacing:-0.123px;">Fish</span>
<span class="t" style="left:218.30px;top:692.90px;font-size:10px;letter-spacing:0.329px;">Heart</span>
<span class="t" style="left:322.20px;top:692.90px;font-size:10px;letter-spacing:0.100px;">Penguin</span>
<span class="t" style="left:417.20px;top:692.90px;font-size:10px;letter-spacing:0.234px;">PenguinArea</span>
<span class="t" style="left:515.40px;top:692.90px;font-size:10px;letter-spacing:0.247px;">RegurgitatedFish</span>
<div style="left:0px;top:682.4px;width:1.4px;height:67px;background:#ffffff;"></div>
<svg style="left:858px;top:8.5px;" width="10" height="10" viewBox="0 0 10 10"><circle cx="5" cy="5" r="4.6" fill="#555"/><rect x="4.3" y="4.2" width="1.4" height="3.6" fill="#cbcbcb"/><rect x="4.3" y="2" width="1.4" height="1.4" fill="#cbcbcb"/></svg>
<span class="t" style="left:873.40px;top:5.70px;font-size:12px;letter-spacing:0.271px;">Inspector</span>
<svg style="left:946.8px;top:7.3px;" width="12" height="12" viewBox="0 0 12 12"><g fill="#555"><circle cx="6" cy="6" r="4.3"/><rect x="4.8" y="-0.1" width="2.4" height="12.2" rx="0.6" transform="rotate(0 6 6)"/><rect x="4.8" y="-0.1" width="2.4" height="12.2" rx="0.6" transform="rotate(45 6 6)"/><rect x="4.8" y="-0.1" width="2.4" height="12.2" rx="0.6" transform="rotate(90 6 6)"/><rect x="4.8" y="-0.1" width="2.4" height="12.2" rx="0.6" transform="rotate(135 6 6)"/></g><circle cx="6" cy="6" r="1.9" fill="#a5a5a5"/></svg>
<span class="t" style="left:963.20px;top:5.70px;font-size:12px;letter-spacing:0.285px;">Project Settings</span>
<svg style="left:1075.6px;top:7.6px;" width="9" height="12" viewBox="0 0 9 12"><g fill="#555"><circle cx="4.5" cy="4.3" r="4.1"/><rect x="2.7" y="6.5" width="3.6" height="2.6"/><rect x="2.9" y="9.8" width="3.2" height="1.2" rx="0.5"/></g></svg>
<span class="t" style="left:1090.40px;top:5.70px;font-size:12px;letter-spacing:0.321px;">Lighting</span>
<svg style="left:1194.5px;top:7px;" width="9" height="10.5" viewBox="0 0 9 10.5"><rect x="0.9" y="5" width="7.2" height="4.7" rx="0.6" fill="none" stroke="#ddd" stroke-width="1.2"/><path d="M3 5V2.7C3 0.4 6.6 0.4 6.6 2.7V3.2" fill="none" stroke="#ddd" stroke-width="1.1"/></svg>
<svg style="left:1213px;top:6.199999999999999px;" width="4" height="12" viewBox="0 0 4 12"><rect x="1.0" y="1.1" width="2.0" height="2.0" fill="#555"/><rect x="1.0" y="5.0" width="2.0" height="2.0" fill="#555"/><rect x="1.0" y="8.9" width="2.0" height="2.0" fill="#555"/></svg>
<svg style="left:855.5px;top:32px;" width="21.5" height="22.5" viewBox="0 0 21.5 22.5"><g fill="none" stroke="#555" stroke-width="1.3" stroke-linejoin="round"><path d="M10.7 1.2L20 5.6V15.8L10.7 21.2L1.3 15.8V5.6Z"/><path d="M1.6 5.9L10.7 10.6L19.8 5.9M10.7 10.6V21"/></g></svg>
<svg style="left:876.0px;top:53.2px;" width="6.6" height="4" viewBox="0 0 6.6 4"><path d="M0 0H6.6L3.3 4Z" fill="#505046"/></svg>
<div class="cb" style="left:895.6px;top:33.6px;width:12.6px;height:12.6px;"></div>
<svg style="left:895.6px;top:33.6px;" width="12.6" height="12.6" viewBox="0 0 12.6 12.6"><path d="M2.9 6.7L5.3 9.1L9.9 4" fill="none" stroke="#2a2a2a" stroke-width="1.3"/></svg>
<div class="fld" style="left:915.6px;top:32px;width:242.60000000000002px;height:16.4px;"></div>
<span class="t" style="left:918.40px;top:32.70px;font-size:12px;letter-spacing:-0.217px;font-weight:bold;">Fish</span>
<div class="cb" style="left:1162.6px;top:33.6px;width:12.6px;height:12.6px;"></div>
<span class="t" style="left:1180.30px;top:32.70px;font-size:12px;letter-spacing:0.348px;">Static</span>
<svg style="left:1215.3px;top:38.1px;" width="7" height="4.3" viewBox="0 0 7 4.3"><path d="M0 0H7L3.5 4.3Z" fill="#505046"/></svg>
<span class="t" style="left:892.20px;top:56.30px;font-size:12px;letter-spacing:0.484px;color:#1b4a97;">Tag</span>
<div class="dd" style="left:917px;top:55.3px;width:134.79999999999995px;height:17.299999999999997px;border:1px solid #3a6db4;box-shadow:none;"></div>
<span class="t" style="left:921.30px;top:55.65px;font-size:12px;letter-spacing:0.157px;">fish</span>
<svg style="left:1038.9px;top:61.5px;" width="7" height="4.2" viewBox="0 0 7 4.2"><path d="M0 0H7L3.5 4.2Z" fill="#505046"/></svg>
<div style="left:915px;top:74px;width:143.3px;height:2.8px;background:#ff0a0a;border-radius:1.4px;"></div>
<span class="t" style="left:1064.40px;top:56.30px;font-size:12px;letter-spacing:0.356px;">Layer</span>
<div class="dd" style="left:1100.6px;top:55.6px;width:123.80000000000018px;height:16.999999999999993px;"></div>
<span class="t" style="left:1104.10px;top:55.80px;font-size:12px;letter-spacing:0.397px;">Default</span>
<svg style="left:1211.5px;top:61.7px;" width="7" height="4.2" viewBox="0 0 7 4.2"><path d="M0 0H7L3.5 4.2Z" fill="#505046"/></svg>
<div style="left:849px;top:81px;width:380px;height:1px;background:#9a9a9a;"></div>
<div style="left:849px;top:82px;width:380px;height:20.6px;background:#cbcbcb;"></div>
<div style="left:849px;top:101.8px;width:380px;height:0.8px;background:#bcbcbc;"></div>
<svg style="left:855.1px;top:89.8px;" width="9" height="7.5" viewBox="0 0 9 7.5"><path d="M0 0H9L4.5 7.5Z" fill="#7f7f7f"/></svg>
<span class="t" style="left:909.50px;top:84.60px;font-size:12px;letter-spacing:0.280px;font-weight:bold;">Transform</span>
<svg style="left:1171px;top:87.1px;" width="10" height="10" viewBox="0 0 10 10"><circle cx="5" cy="5" r="4.9" fill="#555"/><path d="M3.4 4.1C3.4 2.2 6.6 2.2 6.6 4.1C6.6 5.2 5 5.2 5 6.4" fill="none" stroke="#cbcbcb" stroke-width="1.3"/><rect x="4.35" y="7.1" width="1.3" height="1.3" fill="#cbcbcb"/></svg>
<svg style="left:1190.3px;top:87.19999999999999px;" width="11" height="10" viewBox="0 0 11 10"><g fill="#4d4d4d"><rect x="0.3" y="2.1" width="10.4" height="1.3"/><rect x="6.1" y="0" width="1.4" height="5.2"/><rect x="0.3" y="6.7" width="10.4" height="1.3"/><rect x="3.4" y="4.6" width="1.4" height="5.2"/></g><g fill="#cbcbcb"><rect x="4.9" y="1.9" width="1.2" height="1.7"/><rect x="4.8" y="6.5" width="1.2" height="1.7"/></g></svg>
<svg style="left:1213.8px;top:86.19999999999999px;" width="4" height="12" viewBox="0 0 4 12"><rect x="1.0" y="1.1" width="2.0" height="2.0" fill="#555555"/><rect x="1.0" y="5.0" width="2.0" height="2.0" fill="#555555"/><rect x="1.0" y="8.9" width="2.0" height="2.0" fill="#555555"/></svg>
<svg style="left:870px;top:85.5px;" width="14.5" height="12.5" viewBox="0 0 14.5 12.5"><g fill="none" stroke-width="1.9" stroke-linecap="round"><path d="M7.1 6.2V1.4" stroke="#2f9c3f"/><path d="M8.6 8.2L12.4 10.4" stroke="#d8232a"/><path d="M5.6 8.2L1.8 10.4" stroke="#1d6fd6"/></g></svg>
<span class="t" style="left:868.30px;top:108.60px;font-size:12px;letter-spacing:0.201px;">Position</span>
<span class="t" style="left:1001.20px;top:108.60px;font-size:12px;letter-spacing:0.200px;">X</span>
<div class="fld" style="left:1012.8px;top:107.8px;width:58.40000000000009px;height:16.5px;"></div>
<span class="t" style="left:1015.40px;top:108.45px;font-size:12px;letter-spacing:0.200px;">0</span>
<span class="t" style="left:1078.60px;top:108.60px;font-size:12px;letter-spacing:0.200px;">Y</span>
<div class="fld" style="left:1090px;top:107.8px;width:58.200000000000045px;height:16.5px;"></div>
<span class="t" style="left:1092.60px;top:108.45px;font-size:12px;letter-spacing:0.200px;">0</span>
<span class="t" style="left:1154.60px;top:108.60px;font-size:12px;letter-spacing:0.200px;">Z</span>
<div class="fld" style="left:1165.6px;top:107.8px;width:58.80000000000018px;height:16.5px;"></div>
<span class="t" style="left:1168.20px;top:108.45px;font-size:12px;letter-spacing:0.200px;">0</span>
<span class="t" style="left:868.30px;top:130.60px;font-size:12px;letter-spacing:0.201px;">Rotation</span>
<span class="t" style="left:1001.20px;top:130.60px;font-size:12px;letter-spacing:0.200px;">X</span>
<div class="fld" style="left:1012.8px;top:130px;width:58.40000000000009px;height:16.30000000000001px;"></div>
<span class="t" style="left:1015.40px;top:130.55px;font-size:12px;letter-spacing:0.200px;">0</span>
<span class="t" style="left:1078.60px;top:130.60px;font-size:12px;letter-spacing:0.200px;">Y</span>
<div class="fld" style="left:1090px;top:130px;width:58.200000000000045px;height:16.30000000000001px;"></div>
<span class="t" style="left:1092.60px;top:130.55px;font-size:12px;letter-spacing:0.200px;">0</span>
<span class="t" style="left:1154.60px;top:130.60px;font-size:12px;letter-spacing:0.200px;">Z</span>
<div class="fld" style="left:1165.6px;top:130px;width:58.80000000000018px;height:16.30000000000001px;"></div>
<span class="t" style="left:1168.20px;top:130.55px;font-size:12px;letter-spacing:0.200px;">0</span>
<span class="t" style="left:868.30px;top:150.60px;font-size:12px;letter-spacing:0.256px;">Scale</span>
<span class="t" style="left:1001.20px;top:150.60px;font-size:12px;letter-spacing:0.200px;">X</span>
<div class="fld" style="left:1012.8px;top:150px;width:58.40000000000009px;height:16.400000000000006px;"></div>
<span class="t" style="left:1015.40px;top:150.60px;font-size:12px;letter-spacing:0.200px;">1</span>
<span class="t" style="left:1078.60px;top:150.60px;font-size:12px;letter-spacing:0.200px;">Y</span>
<div class="fld" style="left:1090px;top:150px;width:58.200000000000045px;height:16.400000000000006px;"></div>
<span class="t" style="left:1092.60px;top:150.60px;font-size:12px;letter-spacing:0.200px;">1</span>
<span class="t" style="left:1154.60px;top:150.60px;font-size:12px;letter-spacing:0.200px;">Z</span>
<div class="fld" style="left:1165.6px;top:150px;width:58.80000000000018px;height:16.400000000000006px;"></div>
<span class="t" style="left:1168.20px;top:150.60px;font-size:12px;letter-spacing:0.200px;">1</span>
<div style="left:849px;top:176px;width:380px;height:1px;background:#9a9a9a;"></div>
<div style="left:849px;top:177px;width:380px;height:20.6px;background:#cbcbcb;"></div>
<div style="left:849px;top:196.79999999999998px;width:380px;height:0.8px;background:#bcbcbc;"></div>
<svg style="left:855.1px;top:184.8px;" width="9" height="7.5" viewBox="0 0 9 7.5"><path d="M0 0H9L4.5 7.5Z" fill="#7f7f7f"/></svg>
<span class="t" style="left:909.50px;top:179.60px;font-size:12px;letter-spacing:0.185px;font-weight:bold;">Cube (Mesh Filter)</span>
<svg style="left:1171px;top:182.1px;" width="10" height="10" viewBox="0 0 10 10"><circle cx="5" cy="5" r="4.9" fill="#555"/><path d="M3.4 4.1C3.4 2.2 6.6 2.2 6.6 4.1C6.6 5.2 5 5.2 5 6.4" fill="none" stroke="#cbcbcb" stroke-width="1.3"/><rect x="4.35" y="7.1" width="1.3" height="1.3" fill="#cbcbcb"/></svg>
<svg style="left:1190.3px;top:182.2px;" width="11" height="10" viewBox="0 0 11 10"><g fill="#4d4d4d"><rect x="0.3" y="2.1" width="10.4" height="1.3"/><rect x="6.1" y="0" width="1.4" height="5.2"/><rect x="0.3" y="6.7" width="10.4" height="1.3"/><rect x="3.4" y="4.6" width="1.4" height="5.2"/></g><g fill="#cbcbcb"><rect x="4.9" y="1.9" width="1.2" height="1.7"/><rect x="4.8" y="6.5" width="1.2" height="1.7"/></g></svg>
<svg style="left:1213.8px;top:181.2px;" width="4" height="12" viewBox="0 0 4 12"><rect x="1.0" y="1.1" width="2.0" height="2.0" fill="#555555"/><rect x="1.0" y="5.0" width="2.0" height="2.0" fill="#555555"/><rect x="1.0" y="8.9" width="2.0" height="2.0" fill="#555555"/></svg>
<svg style="left:870px;top:180px;" width="13" height="13" viewBox="0 0 13 13"><rect x="0.6" y="0.6" width="11.8" height="11.8" rx="1" fill="#e8eef6" stroke="#1e6fd2" stroke-width="1.2"/><path d="M4.5 0.6V12.4M8.5 0.6V12.4M0.6 4.5H12.4M0.6 8.5H12.4" stroke="#1e6fd2" stroke-width="1.2" fill="none"/></svg>
<span class="t" style="left:868.30px;top:203.80px;font-size:12px;letter-spacing:0.314px;">Mesh</span>
<div class="fld" style="left:1000.7px;top:203px;width:223.70000000000005px;height:16.30000000000001px;"></div>
<div style="left:1206px;top:204px;width:17.6px;height:14.3px;background:#e4e4e4;border-radius:0 2px 2px 0;"></div>
<svg style="left:1003.6px;top:206.2px;" width="10" height="10" viewBox="0 0 13 13"><rect x="0.6" y="0.6" width="11.8" height="11.8" rx="1" fill="#e8eef6" stroke="#6f8fb8" stroke-width="1.2"/><path d="M4.5 0.6V12.4M8.5 0.6V12.4M0.6 4.5H12.4M0.6 8.5H12.4" stroke="#6f8fb8" stroke-width="1.2" fill="none"/></svg>
<span class="t" style="left:1016.00px;top:203.90px;font-size:12px;letter-spacing:0.278px;">Cube</span>
<svg style="left:1209.8px;top:205.8px;" width="10.6" height="10.6" viewBox="0 0 10.6 10.6"><circle cx="5.3" cy="5.3" r="4.6" fill="none" stroke="#555" stroke-width="1"/><circle cx="5.3" cy="5.3" r="1.5" fill="#555"/></svg>
<div style="left:849px;top:227px;width:380px;height:1px;background:#9a9a9a;"></div>
<div style="left:849px;top:228px;width:380px;height:24px;background:#cbcbcb;"></div>
<div style="left:849px;top:251.2px;width:380px;height:0.8px;background:#bcbcbc;"></div>
<svg style="left:856.0px;top:234.5px;" width="7.5" height="8" viewBox="0 0 7.5 8"><path d="M0 0V8L7.5 4.0Z" fill="#7f7f7f"/></svg>
<div class="cb" style="left:889.8px;top:232.1px;width:12.6px;height:12.6px;"></div>
<svg style="left:889.8px;top:232.1px;" width="12.6" height="12.6" viewBox="0 0 12.6 12.6"><path d="M2.9 6.7L5.3 9.1L9.9 4" fill="none" stroke="#2a2a2a" stroke-width="1.3"/></svg>
<span class="t" style="left:909.50px;top:230.70px;font-size:12px;letter-spacing:0.100px;font-weight:bold;">Mesh Renderer</span>
<svg style="left:1171px;top:233.2px;" width="10" height="10" viewBox="0 0 10 10"><circle cx="5" cy="5" r="4.9" fill="#555"/><path d="M3.4 4.1C3.4 2.2 6.6 2.2 6.6 4.1C6.6 5.2 5 5.2 5 6.4" fill="none" stroke="#cbcbcb" stroke-width="1.3"/><rect x="4.35" y="7.1" width="1.3" height="1.3" fill="#cbcbcb"/></svg>
<svg style="left:1190.3px;top:233.29999999999998px;" width="11" height="10" viewBox="0 0 11 10"><g fill="#4d4d4d"><rect x="0.3" y="2.1" width="10.4" height="1.3"/><rect x="6.1" y="0" width="1.4" height="5.2"/><rect x="0.3" y="6.7" width="10.4" height="1.3"/><rect x="3.4" y="4.6" width="1.4" height="5.2"/></g><g fill="#cbcbcb"><rect x="4.9" y="1.9" width="1.2" height="1.7"/><rect x="4.8" y="6.5" width="1.2" height="1.7"/></g></svg>
<svg style="left:1213.8px;top:232.29999999999998px;" width="4" height="12" viewBox="0 0 4 12"><rect x="1.0" y="1.1" width="2.0" height="2.0" fill="#555555"/><rect x="1.0" y="5.0" width="2.0" height="2.0" fill="#555555"/><rect x="1.0" y="8.9" width="2.0" height="2.0" fill="#555555"/></svg>
<svg style="left:870px;top:231.5px;" width="15" height="14" viewBox="0 0 15 14"><rect x="0.6" y="0.6" width="11.8" height="11.8" rx="1" fill="#e8eef6" stroke="#1e6fd2" stroke-width="1.2"/><path d="M4.5 0.6V12.4M8.5 0.6V12.4M0.6 4.5H12.4M0.6 8.5H12.4" stroke="#1e6fd2" stroke-width="1.2" fill="none"/><ellipse cx="9.6" cy="11" rx="5" ry="3.3" fill="#cbcbcb"/><ellipse cx="9.6" cy="11" rx="4.4" ry="2.5" fill="#666"/><circle cx="9.6" cy="10.8" r="1.3" fill="#cbcbcb"/></svg>
<div style="left:849px;top:252px;width:380px;height:1px;background:#9a9a9a;"></div>
<div style="left:849px;top:253px;width:380px;height:20.6px;background:#cbcbcb;"></div>
<div style="left:849px;top:272.8px;width:380px;height:0.8px;background:#bcbcbc;"></div>
<svg style="left:855.1px;top:260.9px;" width="9" height="7.5" viewBox="0 0 9 7.5"><path d="M0 0H9L4.5 7.5Z" fill="#7f7f7f"/></svg>
<span class="t" style="left:909.50px;top:255.80px;font-size:12px;letter-spacing:0.060px;font-weight:bold;">Rigidbody</span>
<svg style="left:1171px;top:258.3px;" width="10" height="10" viewBox="0 0 10 10"><circle cx="5" cy="5" r="4.9" fill="#555"/><path d="M3.4 4.1C3.4 2.2 6.6 2.2 6.6 4.1C6.6 5.2 5 5.2 5 6.4" fill="none" stroke="#cbcbcb" stroke-width="1.3"/><rect x="4.35" y="7.1" width="1.3" height="1.3" fill="#cbcbcb"/></svg>
<svg style="left:1190.3px;top:258.40000000000003px;" width="11" height="10" viewBox="0 0 11 10"><g fill="#4d4d4d"><rect x="0.3" y="2.1" width="10.4" height="1.3"/><rect x="6.1" y="0" width="1.4" height="5.2"/><rect x="0.3" y="6.7" width="10.4" height="1.3"/><rect x="3.4" y="4.6" width="1.4" height="5.2"/></g><g fill="#cbcbcb"><rect x="4.9" y="1.9" width="1.2" height="1.7"/><rect x="4.8" y="6.5" width="1.2" height="1.7"/></g></svg>
<svg style="left:1213.8px;top:257.40000000000003px;" width="4" height="12" viewBox="0 0 4 12"><rect x="1.0" y="1.1" width="2.0" height="2.0" fill="#555555"/><rect x="1.0" y="5.0" width="2.0" height="2.0" fill="#555555"/><rect x="1.0" y="8.9" width="2.0" height="2.0" fill="#555555"/></svg>
<div style="left:902.8px;top:270.7px;width:81.20000000000005px;height:2.6px;background:#ff0a0a;border-radius:1.3px;"></div>
<svg style="left:869.8px;top:256px;" width="14.4" height="14.4" viewBox="0 0 14.4 14.4"><circle cx="7.2" cy="7.2" r="6.4" fill="#e9efe9" stroke="#2e8b2e" stroke-width="1.4"/><path d="M7.2 7.2V0.8A6.4 6.4 0 0 0 0.8 7.2Z" fill="#2e8b2e"/><path d="M7.2 7.2V13.6A6.4 6.4 0 0 0 13.6 7.2Z" fill="#2e8b2e"/></svg>
<span class="t" style="left:868.30px;top:279.60px;font-size:12px;letter-spacing:0.307px;">Mass</span>
<div class="fld" style="left:1000.7px;top:279px;width:223.70000000000005px;height:16.30000000000001px;"></div>
<span class="t" style="left:1003.40px;top:279.55px;font-size:12px;letter-spacing:0.200px;">1</span>
<span class="t" style="left:868.30px;top:299.70px;font-size:12px;letter-spacing:0.173px;">Drag</span>
<div class="fld" style="left:1000.7px;top:299px;width:223.70000000000005px;height:16.30000000000001px;"></div>
<span class="t" style="left:1003.40px;top:299.55px;font-size:12px;letter-spacing:0.200px;">0</span>
<span class="t" style="left:868.30px;top:319.60px;font-size:12px;letter-spacing:0.166px;">Angular Drag</span>
<div class="fld" style="left:1000.7px;top:319px;width:223.70000000000005px;height:16.30000000000001px;"></div>
<span class="t" style="left:1003.40px;top:319.55px;font-size:12px;letter-spacing:0.511px;">0.05</span>
<span class="t" style="left:868.30px;top:339.60px;font-size:12px;letter-spacing:0.211px;">Use Gravity</span>
<div class="cb" style="left:1000.7px;top:341px;width:12.6px;height:12.6px;"></div>
<svg style="left:1000.7px;top:341px;" width="12.6" height="12.6" viewBox="0 0 12.6 12.6"><path d="M2.9 6.7L5.3 9.1L9.9 4" fill="none" stroke="#2a2a2a" stroke-width="1.3"/></svg>
<span class="t" style="left:868.30px;top:359.50px;font-size:12px;letter-spacing:0.137px;">Is Kinematic</span>
<div class="cb" style="left:1000.7px;top:360.7px;width:12.6px;height:12.6px;"></div>
<span class="t" style="left:868.30px;top:379.50px;font-size:12px;letter-spacing:0.245px;">Interpolate</span>
<div class="dd" style="left:1000.7px;top:379.2px;width:223.70000000000005px;height:16.19999999999999px;"></div>
<span class="t" style="left:1004.30px;top:379.00px;font-size:12px;letter-spacing:0.153px;">None</span>
<svg style="left:1211.5px;top:384.9px;" width="7" height="4.2" viewBox="0 0 7 4.2"><path d="M0 0H7L3.5 4.2Z" fill="#505046"/></svg>
<span class="t" style="left:868.30px;top:399.60px;font-size:12px;letter-spacing:0.306px;">Collision Detection</span>
<div class="dd" style="left:1000.7px;top:399.2px;width:223.70000000000005px;height:16.30000000000001px;"></div>
<span class="t" style="left:1004.30px;top:399.05px;font-size:12px;letter-spacing:0.311px;">Discrete</span>
<svg style="left:1211.5px;top:404.9px;" width="7" height="4.2" viewBox="0 0 7 4.2"><path d="M0 0H7L3.5 4.2Z" fill="#505046"/></svg>
<svg style="left:859.3px;top:424.5px;" width="8.6" height="7.2" viewBox="0 0 8.6 7.2"><path d="M0 0H8.6L4.3 7.2Z" fill="#7f7f7f"/></svg>
<span class="t" style="left:871.50px;top:419.60px;font-size:12px;letter-spacing:0.255px;">Constraints</span>
<span class="t" style="left:883.30px;top:439.60px;font-size:12px;letter-spacing:0.188px;">Freeze Position</span>
<div class="cb" style="left:1000.7px;top:440.8px;width:12.6px;height:12.6px;"></div>
<span class="t" style="left:1018.00px;top:439.60px;font-size:12px;letter-spacing:0.200px;">X</span>
<div class="cb" style="left:1030.7px;top:440.8px;width:12.6px;height:12.6px;"></div>
<span class="t" style="left:1048.00px;top:439.60px;font-size:12px;letter-spacing:0.200px;">Y</span>
<div class="cb" style="left:1060.8px;top:440.8px;width:12.6px;height:12.6px;"></div>
<span class="t" style="left:1078.60px;top:439.60px;font-size:12px;letter-spacing:0.200px;">Z</span>
<span class="t" style="left:883.30px;top:459.50px;font-size:12px;letter-spacing:0.182px;">Freeze Rotation</span>
<div class="cb" style="left:1000.7px;top:460.7px;width:12.6px;height:12.6px;"></div>
<svg style="left:1000.7px;top:460.7px;" width="12.6" height="12.6" viewBox="0 0 12.6 12.6"><path d="M2.9 6.7L5.3 9.1L9.9 4" fill="none" stroke="#2a2a2a" stroke-width="1.3"/></svg>
<span class="t" style="left:1018.00px;top:459.50px;font-size:12px;letter-spacing:0.200px;">X</span>
<div class="cb" style="left:1030.7px;top:460.7px;width:12.6px;height:12.6px;"></div>
<span class="t" style="left:1048.00px;top:459.50px;font-size:12px;letter-spacing:0.200px;">Y</span>
<div class="cb" style="left:1060.8px;top:460.7px;width:12.6px;height:12.6px;"></div>
<svg style="left:1060.8px;top:460.7px;" width="12.6" height="12.6" viewBox="0 0 12.6 12.6"><path d="M2.9 6.7L5.3 9.1L9.9 4" fill="none" stroke="#2a2a2a" stroke-width="1.3"/></svg>
<span class="t" style="left:1078.60px;top:459.50px;font-size:12px;letter-spacing:0.200px;">Z</span>
<div style="left:991px;top:455.8px;width:106.6px;height:24.4px;border:2.9px solid #ff0a0a;"></div>
<svg style="left:860.3px;top:483.4px;" width="7.4" height="8.2" viewBox="0 0 7.4 8.2"><path d="M0 0V8.2L7.4 4.1Z" fill="#7f7f7f"/></svg>
<span class="t" style="left:871.50px;top:479.50px;font-size:12px;letter-spacing:0.121px;">Info</span>
<div style="left:849px;top:503px;width:380px;height:1px;background:#9a9a9a;"></div>
<div style="left:849px;top:504px;width:380px;height:20.6px;background:#cbcbcb;"></div>
<div style="left:849px;top:523.8000000000001px;width:380px;height:0.8px;background:#bcbcbc;"></div>
<svg style="left:855.1px;top:512.1px;" width="9" height="7.5" viewBox="0 0 9 7.5"><path d="M0 0H9L4.5 7.5Z" fill="#7f7f7f"/></svg>
<div class="cb" style="left:889.8px;top:508.4px;width:12.6px;height:12.6px;"></div>
<svg style="left:889.8px;top:508.4px;" width="12.6" height="12.6" viewBox="0 0 12.6 12.6"><path d="M2.9 6.7L5.3 9.1L9.9 4" fill="none" stroke="#2a2a2a" stroke-width="1.3"/></svg>
<span class="t" style="left:909.50px;top:507.00px;font-size:12px;letter-spacing:0.007px;font-weight:bold;">Capsule Collider</span>
<svg style="left:1171px;top:509.5px;" width="10" height="10" viewBox="0 0 10 10"><circle cx="5" cy="5" r="4.9" fill="#555"/><path d="M3.4 4.1C3.4 2.2 6.6 2.2 6.6 4.1C6.6 5.2 5 5.2 5 6.4" fill="none" stroke="#cbcbcb" stroke-width="1.3"/><rect x="4.35" y="7.1" width="1.3" height="1.3" fill="#cbcbcb"/></svg>
<svg style="left:1190.3px;top:509.6px;" width="11" height="10" viewBox="0 0 11 10"><g fill="#4d4d4d"><rect x="0.3" y="2.1" width="10.4" height="1.3"/><rect x="6.1" y="0" width="1.4" height="5.2"/><rect x="0.3" y="6.7" width="10.4" height="1.3"/><rect x="3.4" y="4.6" width="1.4" height="5.2"/></g><g fill="#cbcbcb"><rect x="4.9" y="1.9" width="1.2" height="1.7"/><rect x="4.8" y="6.5" width="1.2" height="1.7"/></g></svg>
<svg style="left:1213.8px;top:508.6px;" width="4" height="12" viewBox="0 0 4 12"><rect x="1.0" y="1.1" width="2.0" height="2.0" fill="#555555"/><rect x="1.0" y="5.0" width="2.0" height="2.0" fill="#555555"/><rect x="1.0" y="8.9" width="2.0" height="2.0" fill="#555555"/></svg>
<div style="left:905px;top:521.7px;width:105px;height:2.6px;background:#ff0a0a;border-radius:1.3px;"></div>
<svg style="left:872.6px;top:507.2px;" width="8.6" height="14" viewBox="0 0 8.6 14"><rect x="0.6" y="0.6" width="7.4" height="12.8" rx="3.7" fill="#3a9a3a" stroke="#2e8b2e" stroke-width="1"/><path d="M4.3 1.5V12.5M1 7H7.6" stroke="#cfe6cf" stroke-width="0.8"/></svg>
<span class="t" style="left:868.30px;top:530.70px;font-size:12px;letter-spacing:0.154px;">Edit Collider</span>
<div class="btn" style="left:1000px;top:531.7px;width:30.3px;height:20.6px;"></div>
<svg style="left:1007.4px;top:535.2px;" width="15.4" height="13.4" viewBox="0 0 15.4 13.4"><path d="M2.6 9.6L6.4 1.9H8.8L12.6 8" fill="none" stroke="#111" stroke-width="1.1" stroke-linejoin="round"/><rect x="0.9" y="9.2" width="2.9" height="2.9" fill="#e4e4e4" stroke="#111" stroke-width="1"/><rect x="11.4" y="7" width="2.9" height="2.9" fill="#e4e4e4" stroke="#111" stroke-width="1"/></svg>
<span class="t" style="left:868.30px;top:554.50px;font-size:12px;letter-spacing:0.168px;">Is Trigger</span>
<div class="cb" style="left:1000.7px;top:556px;width:12.6px;height:12.6px;"></div>
<span class="t" style="left:868.30px;top:574.70px;font-size:12px;letter-spacing:0.315px;">Material</span>
<div class="fld" style="left:1000.7px;top:574px;width:223.70000000000005px;height:16.299999999999955px;"></div>
<div style="left:1206px;top:575px;width:17.6px;height:14.3px;background:#e4e4e4;border-radius:0 2px 2px 0;"></div>
<span class="t" style="left:1003.60px;top:574.70px;font-size:12px;letter-spacing:0.242px;">None (Physic Material)</span>
<svg style="left:1209.8px;top:576.8px;" width="10.6" height="10.6" viewBox="0 0 10.6 10.6"><circle cx="5.3" cy="5.3" r="4.6" fill="none" stroke="#555" stroke-width="1"/><circle cx="5.3" cy="5.3" r="1.5" fill="#555"/></svg>
<span class="t" style="left:868.30px;top:594.50px;font-size:12px;letter-spacing:0.280px;">Center</span>
<span class="t" style="left:1001.20px;top:594.50px;font-size:12px;letter-spacing:0.200px;">X</span>
<div class="fld" style="left:1012.8px;top:594.3px;width:58.40000000000009px;height:15.900000000000091px;"></div>
<span class="t" style="left:1015.40px;top:594.65px;font-size:12px;letter-spacing:0.200px;">0</span>
<span class="t" style="left:1078.60px;top:594.50px;font-size:12px;letter-spacing:0.200px;">Y</span>
<div class="fld" style="left:1090px;top:594.3px;width:58.200000000000045px;height:15.900000000000091px;"></div>
<span class="t" style="left:1092.60px;top:594.65px;font-size:12px;letter-spacing:0.200px;">0</span>
<span class="t" style="left:1154.60px;top:594.50px;font-size:12px;letter-spacing:0.200px;">Z</span>
<div class="fld" style="left:1165.6px;top:594.3px;width:58.80000000000018px;height:15.900000000000091px;"></div>
<span class="t" style="left:1168.80px;top:594.65px;font-size:12px;letter-spacing:0.730px;">-0.08</span>
<span class="t" style="left:868.30px;top:616.70px;font-size:12px;letter-spacing:0.058px;">Radius</span>
<div class="fld" style="left:1000.7px;top:616.3px;width:223.70000000000005px;height:16.100000000000023px;"></div>
<span class="t" style="left:1003.60px;top:616.75px;font-size:12px;letter-spacing:-0.089px;">0.15</span>
<span class="t" style="left:868.30px;top:636.70px;font-size:12px;letter-spacing:0.335px;">Height</span>
<div class="fld" style="left:1000.7px;top:636px;width:223.70000000000005px;height:16.399999999999977px;"></div>
<span class="t" style="left:1003.60px;top:636.60px;font-size:12px;letter-spacing:0.161px;">0.66</span>
<span class="t" style="left:868.30px;top:656.60px;font-size:12px;letter-spacing:0.328px;">Direction</span>
<div class="dd" style="left:1000.7px;top:656px;width:223.70000000000005px;height:16.299999999999955px;"></div>
<span class="t" style="left:1004.30px;top:655.85px;font-size:12px;letter-spacing:0.434px;">Z-Axis</span>
<svg style="left:1211.5px;top:661.8px;" width="7" height="4.2" viewBox="0 0 7 4.2"><path d="M0 0H7L3.5 4.2Z" fill="#505046"/></svg>
<div style="left:849px;top:680px;width:380px;height:1px;background:#9a9a9a;"></div>
<div style="left:849px;top:681px;width:380px;height:20.6px;background:#cbcbcb;"></div>
<div style="left:849px;top:700.8000000000001px;width:380px;height:0.8px;background:#bcbcbc;"></div>
<svg style="left:855.1px;top:688.9px;" width="9" height="7.5" viewBox="0 0 9 7.5"><path d="M0 0H9L4.5 7.5Z" fill="#7f7f7f"/></svg>
<div class="cb" style="left:889.8px;top:685.1999999999999px;width:12.6px;height:12.6px;"></div>
<svg style="left:889.8px;top:685.1999999999999px;" width="12.6" height="12.6" viewBox="0 0 12.6 12.6"><path d="M2.9 6.7L5.3 9.1L9.9 4" fill="none" stroke="#2a2a2a" stroke-width="1.3"/></svg>
<span class="t" style="left:909.50px;top:683.80px;font-size:12px;letter-spacing:0.184px;font-weight:bold;">Fish (Script)</span>
<svg style="left:1171px;top:686.3px;" width="10" height="10" viewBox="0 0 10 10"><circle cx="5" cy="5" r="4.9" fill="#555"/><path d="M3.4 4.1C3.4 2.2 6.6 2.2 6.6 4.1C6.6 5.2 5 5.2 5 6.4" fill="none" stroke="#cbcbcb" stroke-width="1.3"/><rect x="4.35" y="7.1" width="1.3" height="1.3" fill="#cbcbcb"/></svg>
<svg style="left:1190.3px;top:686.4px;" width="11" height="10" viewBox="0 0 11 10"><g fill="#4d4d4d"><rect x="0.3" y="2.1" width="10.4" height="1.3"/><rect x="6.1" y="0" width="1.4" height="5.2"/><rect x="0.3" y="6.7" width="10.4" height="1.3"/><rect x="3.4" y="4.6" width="1.4" height="5.2"/></g><g fill="#cbcbcb"><rect x="4.9" y="1.9" width="1.2" height="1.7"/><rect x="4.8" y="6.5" width="1.2" height="1.7"/></g></svg>
<svg style="left:1213.8px;top:685.4px;" width="4" height="12" viewBox="0 0 4 12"><rect x="1.0" y="1.1" width="2.0" height="2.0" fill="#555555"/><rect x="1.0" y="5.0" width="2.0" height="2.0" fill="#555555"/><rect x="1.0" y="8.9" width="2.0" height="2.0" fill="#555555"/></svg>
<div style="left:903px;top:699.6px;width:86.60000000000002px;height:2.6px;background:#ff0a0a;border-radius:1.3px;"></div>
<svg style="left:870.6px;top:684px;" width="13" height="15" viewBox="0 0 13 15"><rect x="0.5" y="0.5" width="12" height="14" rx="2" fill="#f4f4f4" stroke="#b8b8b8" stroke-width="0.8"/><path d="M5.3 4.6L4.6 10.6M8.2 4.6L7.5 10.6M3.6 6.5H9.6M3.2 8.7H9.2" stroke="#2c6fb5" stroke-width="1" fill="none"/></svg>
<span class="t" style="left:868.30px;top:708.00px;font-size:12px;letter-spacing:0.338px;color:#7a7a7a;">Script</span>
<div class="fld" style="left:1000.7px;top:707.4px;width:223.70000000000005px;height:16.0px;background:#dcdcdc;border-color:#bcbcbc;"></div>
<svg style="left:1004.6px;top:710px;" width="9.4" height="11" viewBox="0 0 9.4 11"><rect x="0.4" y="0.4" width="8.6" height="10.2" rx="1.5" fill="#f4f4f4" stroke="#c4c4c4" stroke-width="0.7"/><path d="M3.9 3.4L3.4 7.8M6 3.4L5.5 7.8M2.6 4.8H7M2.3 6.4H6.7" stroke="#6fa0cf" stroke-width="0.8" fill="none"/></svg>
<span class="t" style="left:1016.20px;top:707.50px;font-size:12px;letter-spacing:-0.018px;color:#6d6d6d;">Fish</span>
<svg style="left:1209.8px;top:710.2px;" width="10.6" height="10.6" viewBox="0 0 10.6 10.6"><circle cx="5.3" cy="5.3" r="4.6" fill="none" stroke="#8a8a8a" stroke-width="1"/><circle cx="5.3" cy="5.3" r="1.5" fill="#8a8a8a"/></svg>
<span class="t" style="left:868.30px;top:727.80px;font-size:12px;letter-spacing:0.080px;">Fish Speed</span>
<div class="fld" style="left:1000.7px;top:727.3px;width:223.70000000000005px;height:16.300000000000068px;"></div>
<span class="t" style="left:1003.40px;top:727.85px;font-size:12px;letter-spacing:0.200px;">0</span>
<div style="left:988.4px;top:590.1px;width:243.6px;height:89.4px;border:3.2px solid #ff0a0a;"></div>
</div>
</body></html>
